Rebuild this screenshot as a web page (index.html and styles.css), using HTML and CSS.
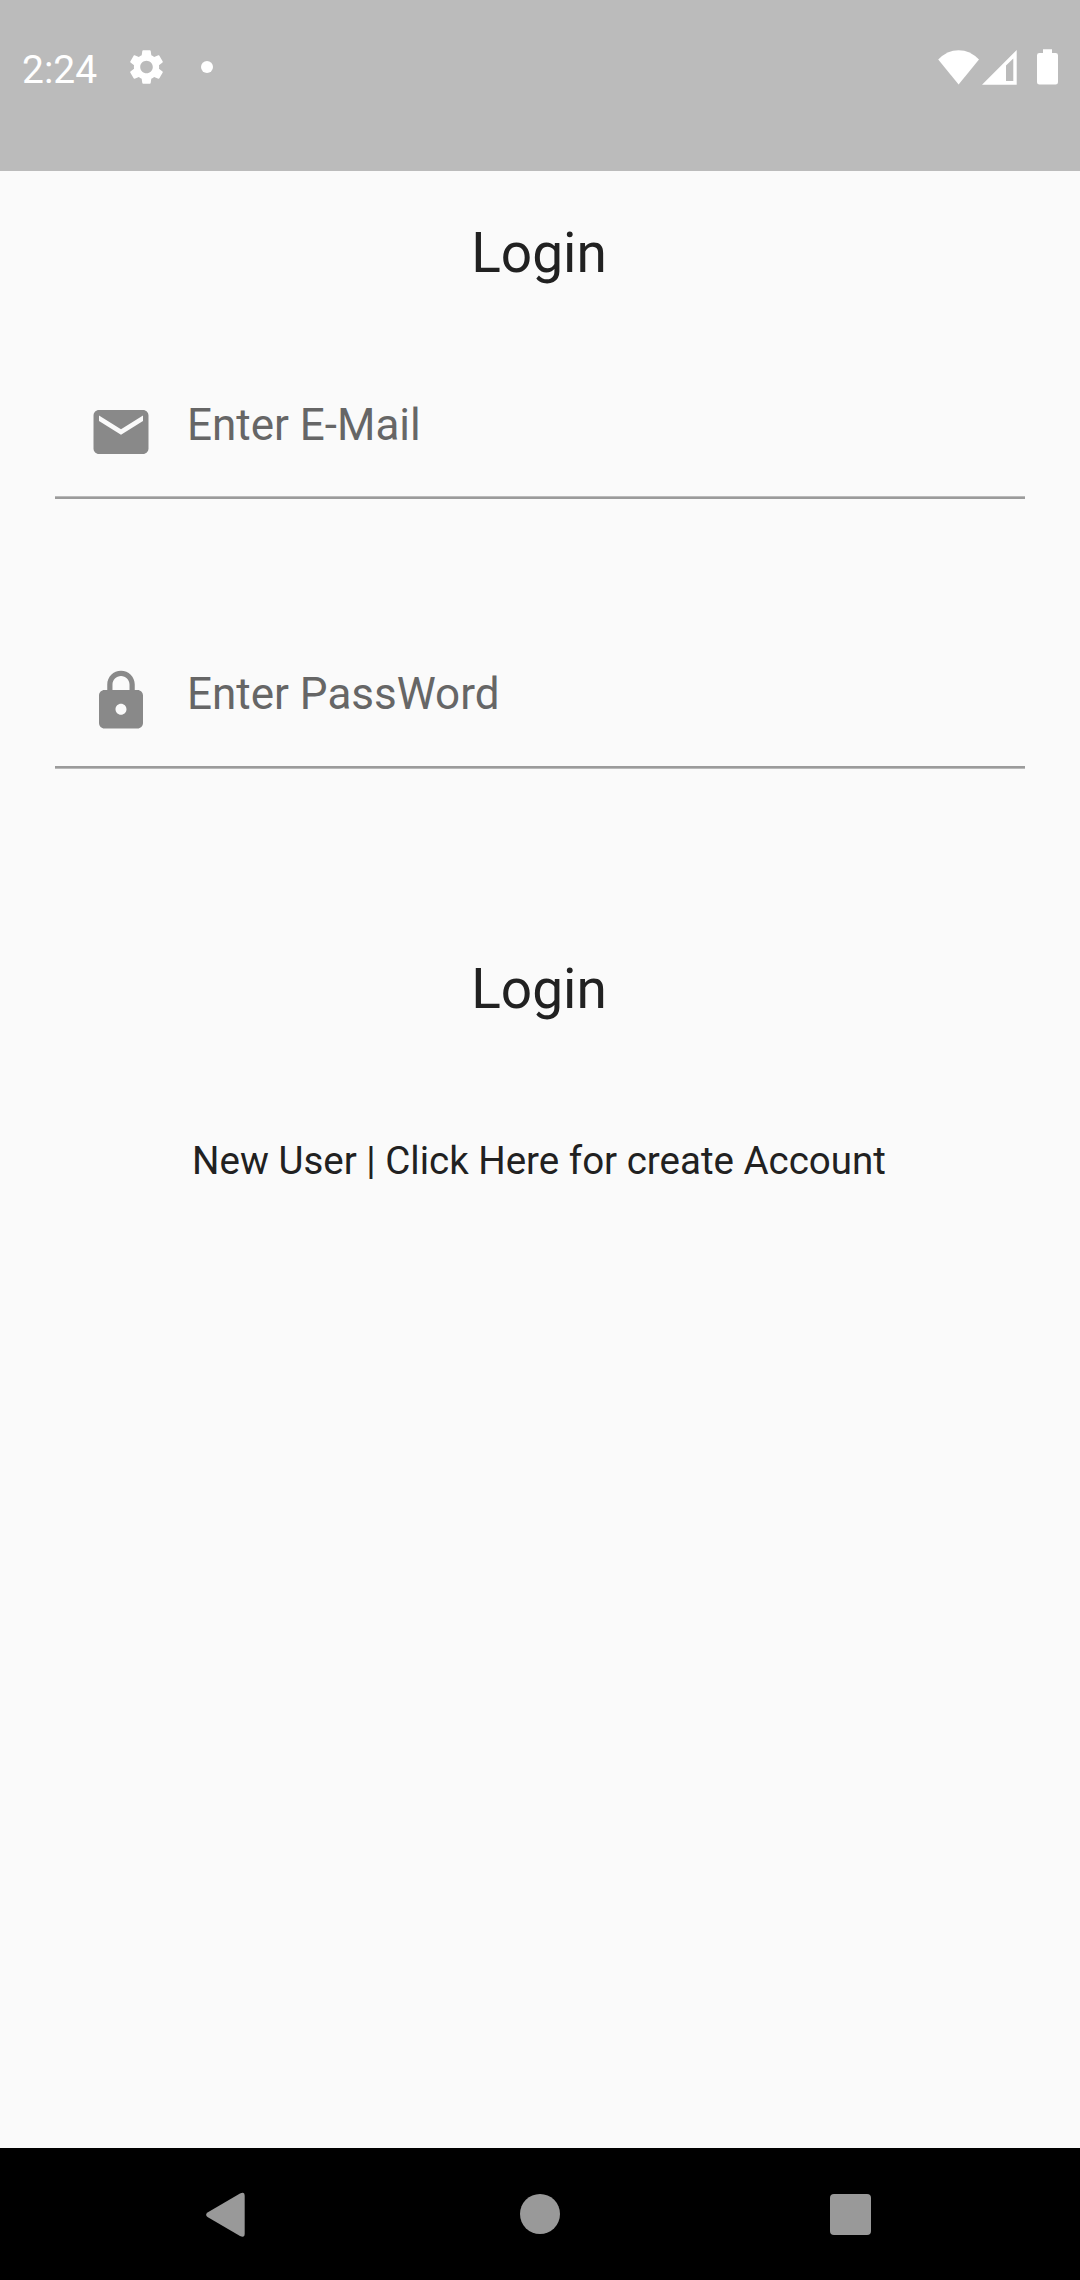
FILE: index.html
```html
<!DOCTYPE html>
<html lang="en">
<head>
<meta charset="utf-8">
<title>Login</title>
<link rel="stylesheet" href="styles.css">
</head>
<body>
<header class="status-bar">
  <div class="status-left">
    <span class="clock">2:24</span>
    <svg class="gear" viewBox="2 2 20 20"><path d="M19.14 12.94c.04-.3.06-.61.06-.94 0-.32-.02-.64-.07-.94l2.03-1.58c.18-.14.23-.41.12-.61l-1.92-3.32c-.12-.22-.37-.29-.59-.22l-2.39.96c-.5-.38-1.03-.7-1.62-.94l-.36-2.54c-.04-.24-.24-.41-.48-.41h-3.84c-.24 0-.43.17-.47.41l-.36 2.54c-.59.24-1.13.57-1.62.94l-2.39-.96c-.22-.08-.47 0-.59.22L2.74 8.87c-.12.21-.08.47.12.61l2.03 1.58c-.05.3-.09.63-.09.94s.02.64.07.94l-2.03 1.58c-.18.14-.23.41-.12.61l1.92 3.32c.12.22.37.29.59.22l2.39-.96c.5.38 1.03.7 1.62.94l.36 2.54c.05.24.24.41.48.41h3.84c.24 0 .44-.17.47-.41l.36-2.54c.59-.24 1.13-.56 1.62-.94l2.39.96c.22.08.47 0 .59-.22l1.92-3.32c.12-.22.07-.47-.12-.61l-2.01-1.58zM12 15.6c-1.98 0-3.6-1.62-3.6-3.6s1.62-3.6 3.6-3.6 3.6 1.62 3.6 3.6-1.62 3.6-3.6 3.6z"/></svg>
    <span class="dot"></span>
  </div>
  <div class="status-right">
    <svg class="wifi" viewBox="0 0 42 35"><path d="M.2 9.6Q9 .2 20.6.2T41 9.6L20.6 34.4z"/></svg>
    <svg class="signal" viewBox="0 0 35 35"><path fill-rule="evenodd" d="M0 34.7 34.7 0V34.7zM24 15.5V31h7.3V8.4z"/></svg>
    <svg class="battery" viewBox="0 0 21 36"><path d="M6 .3h9V4h3.6Q21 4 21 6.200v27q0 2.400-2.400 2.400H2.400Q0 35.600 0 33.200v-27Q0 4 2.400 4H6z"/></svg>
  </div>
</header>
<main class="screen">
  <h1 class="title">Login</h1>
  <form class="form">
    <label class="field field-email">
      <svg class="field-icon" viewBox="0 0 24 24"><path d="M20 4H4c-1.100 0-1.990.9-1.990 2L2 18c0 1.100.9 2 2 2h16c1.100 0 2-.9 2-2V6c0-1.100-.9-2-2-2zm0 4l-8 5-8-5V6l8 5 8-5v2z"/></svg>
      <span class="hint">Enter E-Mail</span>
    </label>
    <label class="field field-password">
      <svg class="field-icon" viewBox="0 0 24 24"><path d="M18 8h-1V6c0-2.760-2.240-5-5-5S7 3.240 7 6v2H6c-1.100 0-2 .9-2 2v10c0 1.100.9 2 2 2h12c1.100 0 2-.9 2-2V10c0-1.100-.9-2-2-2zm-6 9c-1.100 0-2-.9-2-2s.9-2 2-2 2 .9 2 2-.9 2-2 2zm3.100-9H8.900V6c0-1.710 1.390-3.100 3.100-3.100 1.710 0 3.100 1.390 3.100 3.100v2z"/></svg>
      <span class="hint">Enter PassWord</span>
    </label>
  </form>
  <div class="title login-action">Login</div>
  <div class="signup">New User | Click Here for create Account</div>
</main>
<nav class="nav-bar">
  <svg class="nav-back" viewBox="0 0 39 46"><path d="M34 1.500Q38.700-1 38.700 4v37.500q0 5-4.700 2.500L1.500 25Q-1.200 22.700 1.500 20.500z"/></svg>
  <span class="nav-home"></span>
  <span class="nav-recent"></span>
</nav>
</body>
</html>
```
FILE: styles.css
```css
* { box-sizing: border-box; }

body {
  margin: 0;
  width: 1080px;
  height: 2280px;
  display: flex;
  flex-direction: column;
  background: #fafafa;
  color: #212121;
  font-family: Roboto, sans-serif;
}

svg { display: block; flex: none; }

.status-bar {
  height: 171px;
  padding: 49px 22px 0;
  display: flex;
  justify-content: space-between;
  background: #bbb;
  color: #fff;
  fill: #fff;
}

.status-left, .status-right { display: flex; align-items: flex-start; }

.clock { width: 107px; font-size: 39px; line-height: 42px; }
.gear { width: 35px; height: 36px; }
.dot { width: 12px; height: 12px; margin: 12px 0 0 37px; border-radius: 50%; background: #fff; }

.wifi { width: 42px; height: 35px; margin-top: 1px; }
.signal { width: 35px; height: 35px; margin: 1px 0 0 2px; }
.battery { width: 21px; height: 36px; margin-left: 20px; }

.screen { flex: 1; padding: 0 55px; }

.title {
  margin: 0;
  padding: 50px 2px 0 0;
  font-size: 55px;
  font-weight: 400;
  line-height: 64px;
  text-align: center;
}

.field {
  height: 147px;
  padding: 47px 33px 0;
  display: flex;
  gap: 33px;
  background: linear-gradient(#bababa 1px, #9b9b9b 1px) bottom / 100% 3px no-repeat;
}

.field-password {
  height: 148px;
  background-image: linear-gradient(#9b9b9b 2px, #bababa 2px);
}

.form { padding-top: 67px; display: grid; gap: 122px; }
.field-icon { width: 66px; height: 66px; fill: #898989; }
.hint { font-size: 44px; line-height: 52px; color: #666; }

.login-action { padding-top: 188px; }

.signup {
  padding: 117px 2px 0 0;
  font-size: 38.5px;
  line-height: 46px;
  text-align: center;
}

.nav-bar {
  height: 132px;
  padding: 44px 0 0 206px;
  display: flex;
  background: #000;
  fill: #999;
}

.nav-back { width: 39px; height: 46px; }
.nav-home { width: 40px; height: 40px; margin: 2px 270px 0 275px; border-radius: 50%; background: #999; }
.nav-recent { width: 41px; height: 41px; margin-top: 2px; border-radius: 4px; background: #999; }
```
